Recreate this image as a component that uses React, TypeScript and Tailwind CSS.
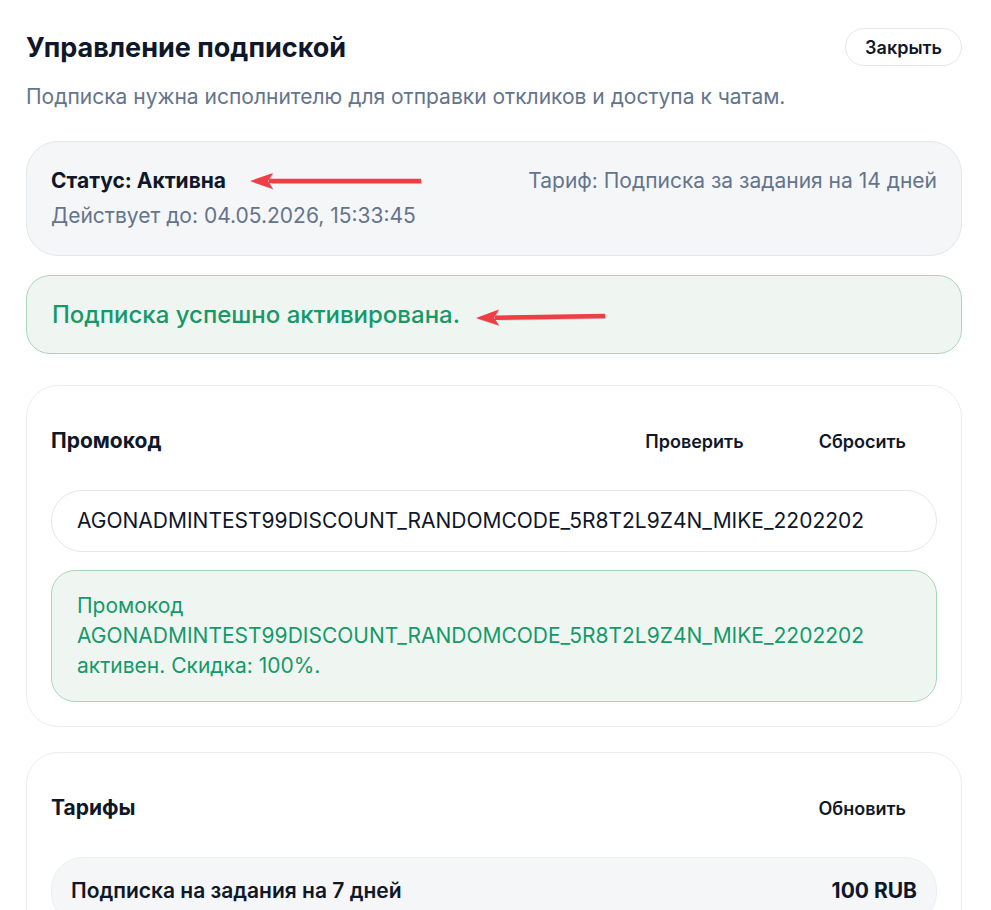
import React from "react";

const CODE = "AGONADMINTEST99DISCOUNT_RANDOMCODE_5R8T2L9Z4N_MIKE_2202202";

function Arrow({ className, length }: { className: string; length: number }) {
  return (
    <svg
      className={className}
      width={length + 4}
      height={20}
      viewBox={`0 0 ${length + 4} 20`}
      fill="none"
    >
      <path d={`M 22 10 L ${length} 10`} stroke="#9ca3af" strokeOpacity="0.5" strokeWidth="4" transform="translate(1 1)" />
      <path d="M 1 10 L 24 2 L 19 10 L 24 18 Z" fill="#9ca3af" fillOpacity="0.5" transform="translate(1 1)" />
      <path d={`M 20 10 L ${length} 10`} stroke="#ef3e44" strokeWidth="4.5" />
      <path d="M 1 10 L 24 2 L 19 10 L 24 18 Z" fill="#ef3e44" />
    </svg>
  );
}

function GhostButton({ children }: { children: React.ReactNode }) {
  return (
    <button className="h-[44px] rounded-full px-[31px] text-[18px] font-semibold text-[#0f172a]">
      {children}
    </button>
  );
}

export default function App() {
  return (
    <div
      className="min-h-screen bg-white pl-[26px] pr-[29px] pt-[28px] pb-10 text-[#0f172a]"
      style={{ fontFamily: "Inter, 'Noto Sans', sans-serif" }}
    >
      <div className="flex items-center justify-between">
        <h1 className="text-[27px] font-bold leading-[40px]">Управление подпиской</h1>
        <button className="-mt-[2px] h-[38px] rounded-full border border-[#e5e7eb] bg-white px-[19px] text-[18px] font-semibold">
          Закрыть
        </button>
      </div>
      <p className="mt-[14px] text-[21px] leading-[30px] text-[#64748b]">
        Подписка нужна исполнителю для отправки откликов и доступа к чатам.
      </p>

      <div className="relative mt-[29px] flex items-start justify-between rounded-[32px] border border-[#e3e6ea] bg-[#f5f6f8] px-[24px] py-[24px]">
        <div>
          <div className="text-[21px] font-bold leading-[30px]">Статус: Активна</div>
          <div className="mt-[5px] text-[21px] leading-[30px] text-[#64748b]">
            Действует до: 04.05.2026, 15:33:45
          </div>
        </div>
        <div className="text-[21px] leading-[30px] text-[#64748b]">
          Тариф: Подписка за задания на 14 дней
        </div>
        <Arrow className="absolute left-[222px] top-[29px]" length={172} />
      </div>

      <div className="relative mt-[19px] flex h-[79px] items-center rounded-[24px] border border-[#a9d6b9] bg-[#eff6f1] px-[25px]">
        <span className="text-[24px] font-medium text-[#15996a]">
          Подписка успешно активирована.
        </span>
        <Arrow className="absolute left-[448px] top-[31px] -rotate-[0.8deg]" length={130} />
      </div>

      <div className="mt-[31px] rounded-[32px] border border-[#ebedf0] bg-white px-[24px] py-[24px]">
        <div className="flex h-[62px] items-center justify-between">
          <h2 className="text-[21px] font-bold">Промокод</h2>
          <div className="flex items-center gap-[13px]">
            <GhostButton>Проверить</GhostButton>
            <GhostButton>Сбросить</GhostButton>
          </div>
        </div>
        <div className="mt-[18px] flex h-[62px] items-center rounded-full border border-[#e5e7eb] bg-white px-[25px] text-[21px]">
          {CODE}
        </div>
        <div className="mt-[18px] rounded-[24px] border border-[#a9d6b9] bg-[#eff6f1] px-[25px] py-[20px] text-[21px] leading-[30px] text-[#15996a]">
          <div>Промокод</div>
          <div>{CODE}</div>
          <div>активен. Скидка: 100%.</div>
        </div>
      </div>

      <div className="mt-[25px] rounded-[32px] border border-[#ebedf0] bg-white px-[24px] py-[24px]">
        <div className="flex h-[62px] items-center justify-between">
          <h2 className="text-[21px] font-bold">Тарифы</h2>
          <GhostButton>Обновить</GhostButton>
        </div>
        <div className="mt-[18px] rounded-[32px] border border-[#eceef1] bg-[#f5f6f8] px-[19px] py-[18px]">
          <div className="flex items-center justify-between text-[21px] leading-[30px]">
            <span className="font-semibold">Подписка на задания на 7 дней</span>
            <span className="font-bold">100 RUB</span>
          </div>
        </div>
      </div>
    </div>
  );
}
